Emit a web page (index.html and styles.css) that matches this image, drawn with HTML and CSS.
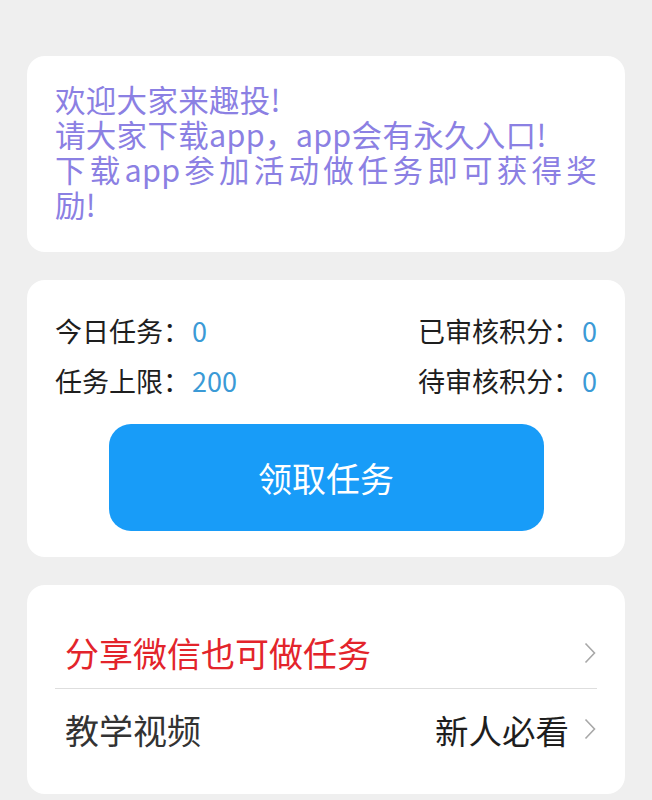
FILE: index.html
```html
<!DOCTYPE html>
<html lang="zh-CN">
<head>
<meta charset="utf-8">
<title>趣投</title>
<link rel="stylesheet" href="styles.css">
</head>
<body>
<main class="page">
  <section class="card notice">
    <p class="notice-line">欢迎大家来趣投!</p>
    <p class="notice-line">请大家下载app，app会有永久入口!</p>
    <p class="notice-line justify">下载app参加活动做任务即可获得奖</p>
    <p class="notice-line">励!</p>
  </section>

  <section class="card stats">
    <div class="stat-row">
      <div class="stat"><span class="label">今日任务：</span><span class="num">0</span></div>
      <div class="stat"><span class="label">已审核积分：</span><span class="num">0</span></div>
    </div>
    <div class="stat-row">
      <div class="stat"><span class="label">任务上限：</span><span class="num">200</span></div>
      <div class="stat"><span class="label">待审核积分：</span><span class="num">0</span></div>
    </div>
    <div class="btn-wrap">
      <button class="btn">领取任务</button>
    </div>
  </section>

  <section class="card menu">
    <div class="menu-row first">
      <span class="menu-title red">分享微信也可做任务</span>
      <svg class="chev" width="12" height="22" viewBox="0 0 12 22"><polyline points="1.5,1.5 10.5,11 1.5,20.5" fill="none" stroke="#a8a8a8" stroke-width="1.6"/></svg>
    </div>
    <div class="menu-row second">
      <span class="menu-title">教学视频</span>
      <span class="menu-right">
        <span class="menu-extra">新人必看</span>
        <svg class="chev" width="12" height="22" viewBox="0 0 12 22"><polyline points="1.5,1.5 10.5,11 1.5,20.5" fill="none" stroke="#a8a8a8" stroke-width="1.6"/></svg>
      </span>
    </div>
  </section>
</main>
</body>
</html>
```

FILE: styles.css
```css
* { box-sizing: border-box; }
html, body {
  margin: 0;
  padding: 0;
  background: #efefef;
  font-family: "Noto Sans CJK SC", "Noto Sans", sans-serif;
}
.page {
  padding: 56px 27px 0;
  display: flex;
  flex-direction: column;
  gap: 28px;
}
.card {
  background: #ffffff;
  border-radius: 18px;
}
.notice {
  padding: 26px 28px 30px;
}
.notice-line {
  margin: 0;
  color: #8b80e3;
  font-size: 30.5px;
  line-height: 35px;
  height: 35px;
  letter-spacing: 0.3px;
  white-space: nowrap;
}
.notice-line.justify {
  text-align: justify;
  text-align-last: justify;
}
.stats {
  padding: 26px 28px 26px;
}
.stat-row {
  display: flex;
  justify-content: space-between;
  align-items: center;
  height: 50px;
}
.stat {
  font-size: 27px;
  line-height: 50px;
  display: flex;
  align-items: center;
}
.label { color: #1e1e1e; }
.num { color: #3b9ad6; margin-left: 2px; }
.btn-wrap {
  display: flex;
  justify-content: center;
  margin-top: 18px;
}
.btn {
  width: 435px;
  height: 107px;
  border: none;
  border-radius: 22px;
  background: #189cf8;
  color: #ffffff;
  font-family: "Noto Sans CJK SC", "Noto Sans", sans-serif;
  font-size: 34px;
  padding: 0;
}
.menu {
  padding: 32px 28px 25px;
}
.menu-row {
  display: flex;
  justify-content: space-between;
  align-items: center;
  padding-left: 10px;
}
.menu-row.first {
  height: 72px;
  border-bottom: 1.5px solid #dedede;
}
.menu-row.second {
  height: 80px;
}
.menu-title {
  font-size: 34px;
  color: #333333;
}
.menu-title.red { color: #e3242b; }
.menu-right {
  display: flex;
  align-items: center;
  gap: 15px;
}
.menu-extra {
  font-size: 33.5px;
  color: #1e1e1e;
}
.chev { display: block; margin-right: 1px; }
```
